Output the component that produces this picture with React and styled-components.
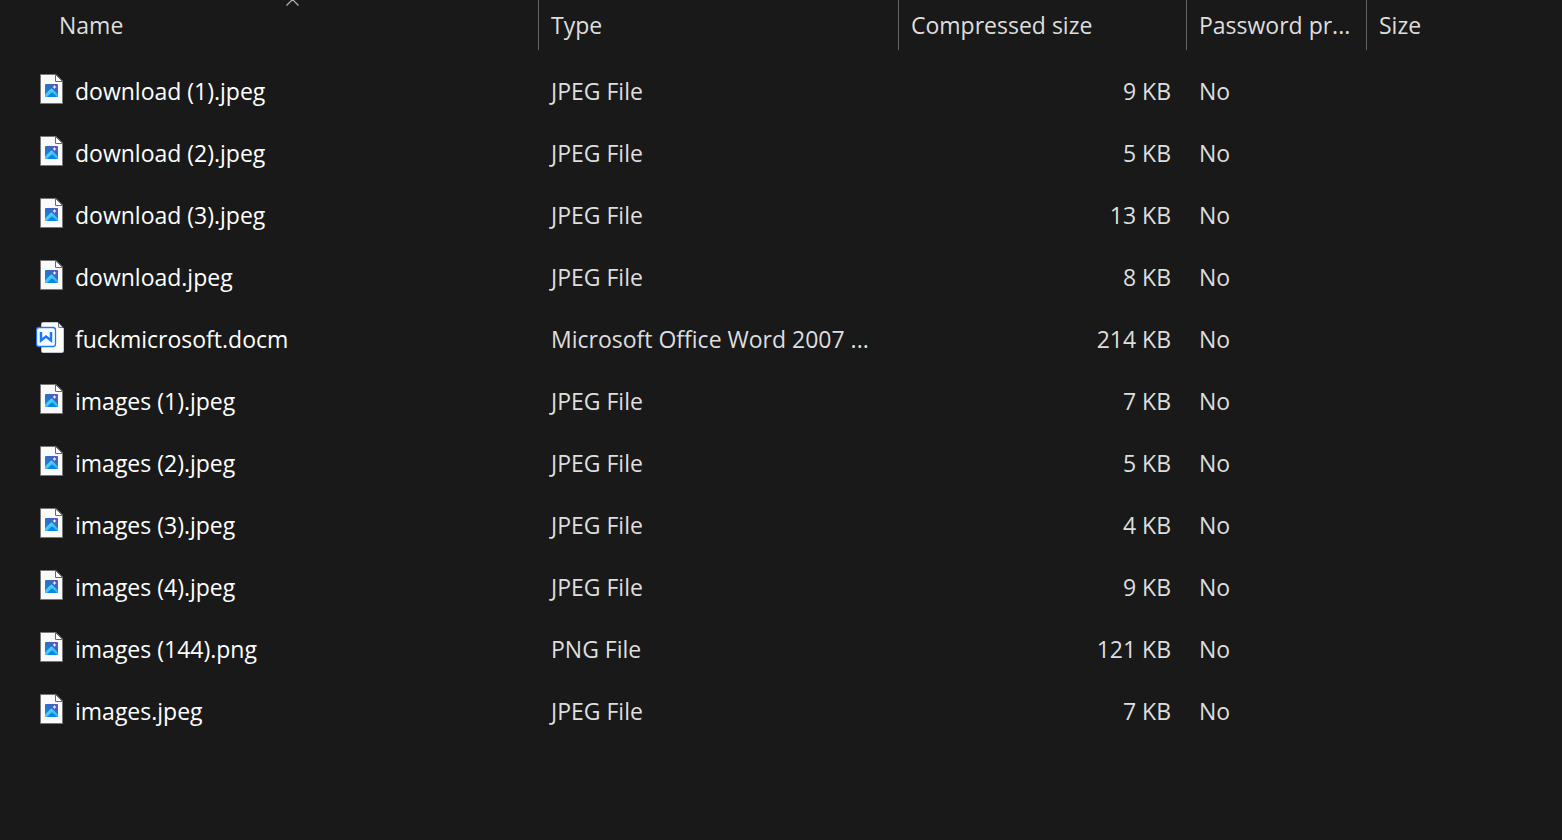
import React from "react";
import styled, { createGlobalStyle } from "styled-components";

const GlobalStyle = createGlobalStyle`
  *, *::before, *::after { box-sizing: border-box; }
  body {
    margin: 0;
    background: #191919;
    color: #dedede;
    font-family: "Open Sans", "Noto Sans", sans-serif;
    font-size: 23px;
    line-height: 32px;
  }
`;

const Page = styled.main`
  min-height: 100vh;
  overflow: hidden;
  background: #191919;
`;

const FileTable = styled.table`
  width: 100%;
  table-layout: fixed;
  border-collapse: collapse;
`;

const Column = styled.col`
  width: ${({ $width }) => $width || "auto"};
`;

const HeaderCell = styled.th`
  position: relative;
  height: 61px;
  padding: 0;
  vertical-align: top;
  text-align: left;
  font-weight: 400;
`;

const HeaderButton = styled.button`
  display: block;
  width: 100%;
  height: 50px;
  padding: 0 12px 1px ${({ $inset }) => ($inset ? "59px" : "12px")};
  border: 0;
  border-right: ${({ $last }) => ($last ? "0" : "1px solid #636363")};
  background: transparent;
  color: inherit;
  font: inherit;
  text-align: left;
  white-space: nowrap;
`;

const SortArrow = styled.svg`
  position: absolute;
  top: 0;
  left: 285px;
  width: 15px;
  height: 7px;
`;

const Row = styled.tr`
  height: 62px;
`;

const Cell = styled.td`
  padding: 0 ${({ $align }) => ($align === "right" ? "16px" : "12px")} 2px 12px;
  text-align: ${({ $align }) => $align || "left"};
  white-space: nowrap;
`;

const NameCell = styled(Cell)`
  padding-left: 36px;
  color: #ffffff;
`;

const FileName = styled.div`
  display: flex;
  align-items: center;
  gap: 7px;
`;

const FileIcon = styled.svg`
  flex: none;
  width: 32px;
  height: 38px;
`;

function ImageIcon() {
  return (
    <FileIcon viewBox="0 -1 32 38" aria-hidden="true">
      <defs>
        <linearGradient id="photo" x1="0" y1="1" x2="1" y2="0">
          <stop offset="0" stopColor="#1689dd" />
          <stop offset="0.5" stopColor="#2574c8" />
          <stop offset="1" stopColor="#6550b4" />
        </linearGradient>
        <linearGradient id="hill" x1="0" y1="0" x2="1" y2="1">
          <stop offset="0" stopColor="#5ce0fa" />
          <stop offset="1" stopColor="#24aef0" />
        </linearGradient>
        <clipPath id="frame"><rect x="9" y="11" width="13" height="13" rx="1" /></clipPath>
      </defs>
      <path d="M4.500 1.500H20L26.500 8V30.500H4.500Z" fill="#fafafa" stroke="#777" />
      <path d="M19.500 1.500V8.500H26.500Z" fill="#fff" stroke="#696969" />
      <g clipPath="url(#frame)">
        <rect x="9" y="11" width="13" height="13" fill="url(#photo)" />
        <path d="M9 21.500L14.500 16Q15.500 15 16.500 16L22 21.500V24H9Z" fill="url(#hill)" />
        <path d="M11 24L15 20Q16 19.200 17 20L21 24Z" fill="#0787e5" />
      </g>
      <path d="M18.500 12L19.200 13.300L20.500 14L19.200 14.700L18.500 16L17.800 14.700L16.500 14L17.800 13.300Z" fill="#e8efff" />
    </FileIcon>
  );
}

function WordIcon() {
  return (
    <FileIcon viewBox="0 -1 32 38" aria-hidden="true">
      <path d="M7 1H22L28 7V30Q28 32 26 32H7Q5 32 5 30V3Q5 1 7 1Z" fill="#fff" stroke="#17233d" strokeWidth="0.500" />
      <path d="M22 1V5Q22 7 24 7H28Z" fill="#17191f" />
      <path d="M22.500 2V5Q22.500 6.500 24 6.500H27Z" fill="#dce8ff" />
      <rect x="0.500" y="6.500" width="19" height="19" rx="2.500" fill="#fff" stroke="#1677ff" strokeWidth="1.300" />
      <path d="M5 11V19.500L10 15.500L15 19.500V11" fill="none" stroke="#1677ff" strokeWidth="2.500" />
    </FileIcon>
  );
}

const files = [
  ["download (1).jpeg", "JPEG File", "9 KB"],
  ["download (2).jpeg", "JPEG File", "5 KB"],
  ["download (3).jpeg", "JPEG File", "13 KB"],
  ["download.jpeg", "JPEG File", "8 KB"],
  ["fuckmicrosoft.docm", "Microsoft Office Word 2007 ...", "214 KB"],
  ["images (1).jpeg", "JPEG File", "7 KB"],
  ["images (2).jpeg", "JPEG File", "5 KB"],
  ["images (3).jpeg", "JPEG File", "4 KB"],
  ["images (4).jpeg", "JPEG File", "9 KB"],
  ["images (144).png", "PNG File", "121 KB"],
  ["images.jpeg", "JPEG File", "7 KB"],
];

export default function App() {
  return (
    <Page>
      <GlobalStyle />
      <FileTable>
        <colgroup>
          <Column $width="539px" />
          <Column $width="360px" />
          <Column $width="288px" />
          <Column $width="180px" />
          <Column />
        </colgroup>
        <thead>
          <tr>
            <HeaderCell scope="col" aria-sort="ascending">
              <HeaderButton type="button" $inset>Name</HeaderButton>
              <SortArrow viewBox="0 0 15 7" aria-hidden="true">
                <path d="M1.500 5.500L7.500 -0.500L13.500 5.500" fill="none" stroke="#b5b5b5" strokeWidth="1.200" />
              </SortArrow>
            </HeaderCell>
            <HeaderCell scope="col"><HeaderButton type="button">Type</HeaderButton></HeaderCell>
            <HeaderCell scope="col"><HeaderButton type="button">Compressed size</HeaderButton></HeaderCell>
            <HeaderCell scope="col"><HeaderButton type="button">Password pr...</HeaderButton></HeaderCell>
            <HeaderCell scope="col"><HeaderButton type="button" $last>Size</HeaderButton></HeaderCell>
          </tr>
        </thead>
        <tbody>
          {files.map(([name, type, size]) => (
            <Row key={name}>
              <NameCell>
                <FileName>
                  {name.endsWith(".docm") ? <WordIcon /> : <ImageIcon />}
                  <span>{name}</span>
                </FileName>
              </NameCell>
              <Cell>{type}</Cell>
              <Cell $align="right">{size}</Cell>
              <Cell>No</Cell>
              <Cell />
            </Row>
          ))}
        </tbody>
      </FileTable>
    </Page>
  );
}
